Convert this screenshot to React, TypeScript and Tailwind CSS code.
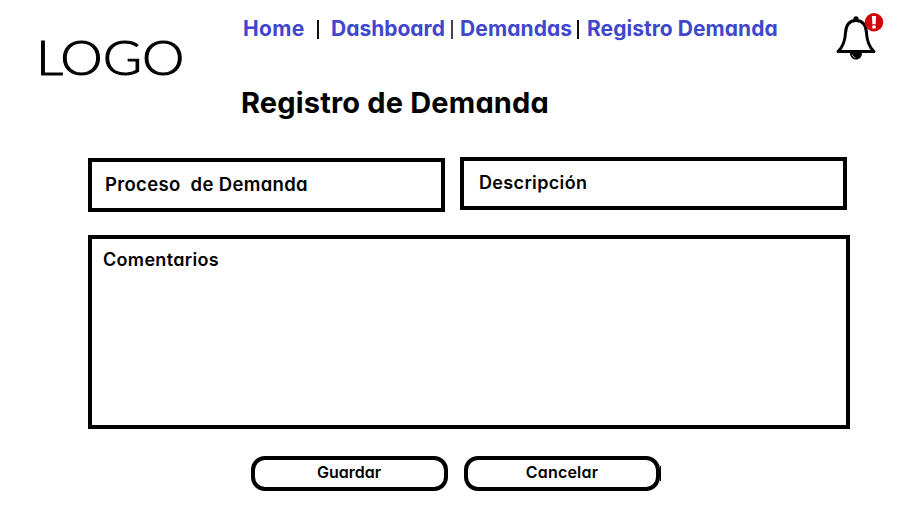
import type { ReactNode } from "react";

function Separator({ className }: { className: string }) {
  return <span className={`h-[19px] w-0.5 shrink-0 ${className}`} />;
}

function NavLink({ className, children }: { className: string; children: ReactNode }) {
  return (
    <a href="#" className={`shrink-0 text-[21px] leading-6 font-bold whitespace-nowrap text-[#3f48cc] ${className}`}>
      {children}
    </a>
  );
}

function BellIcon() {
  return (
    <svg viewBox="0 0 50 50" className="h-[50px] w-[50px]" aria-label="Notificaciones">
      <circle cx="21" cy="8.800" r="2.600" fill="#000" />
      <path
        d="M3 41.500C8 37 10 31 10.500 23C11 14.500 14 10.500 21 10.500C28 10.500 31 14.500 31.500 23C32 31 34 37 39 41.500Z"
        fill="#fff"
        stroke="#000"
        strokeWidth="3"
        strokeLinejoin="round"
      />
      <path d="M15 43H27C27 47 24.500 49.500 21 49.500C17.500 49.500 15 47 15 43Z" fill="#000" />
      <path d="M17.300 44.500C17.600 46.300 18.700 47.300 20.300 47.700" fill="none" stroke="#fff" strokeWidth="0.800" />
      <circle cx="39" cy="12.300" r="9.200" fill="#d00408" />
      <path d="M36.900 6H41.100L40.600 14.200H37.400Z" fill="#fff" />
      <rect x="37.200" y="15.400" width="3.600" height="3" rx="0.600" fill="#fff" />
    </svg>
  );
}

export default function App() {
  return (
    <div className="flex h-[527px] w-[902px] flex-col overflow-hidden bg-white font-['Inter','Liberation_Sans',sans-serif] text-black [font-feature-settings:'cv11']">
      <header className="flex h-[157px] shrink-0 items-start">
        <div className="w-[242px] shrink-0 pt-[28px] pl-[36px]">
          <div className="w-[150px] origin-left scale-x-[1.115] font-['Lato',sans-serif] text-[48px] leading-[58px] font-light [-webkit-text-stroke:1px_#000]">
            <span className="tracking-[-2.5px]">L</span>OGO
          </div>
        </div>
        <div className="w-[593px] shrink-0 pt-[17px]">
          <nav className="flex h-6 items-center">
            <NavLink className="ml-[1px] w-[63px] tracking-[0.3px]">Home</NavLink>
            <Separator className="ml-[11px] bg-[#111]" />
            <NavLink className="ml-[12px] w-[116px]">Dashboard</NavLink>
            <Separator className="ml-[4px] bg-[#444]" />
            <NavLink className="ml-[7px] w-[114px] tracking-[0.1px]">Demandas</NavLink>
            <Separator className="ml-[3px] bg-[#111]" />
            <NavLink className="ml-[8px] tracking-[0.05px]">Registro Demanda</NavLink>
          </nav>
          <h1 className="mt-[44px] -ml-px text-[29px] leading-9 font-bold tracking-[0.17px] whitespace-nowrap">
            Registro de Demanda
          </h1>
        </div>
        <button className="mt-[10px]">
          <BellIcon />
        </button>
      </header>
      <main className="flex flex-col pl-[88px]">
        <div className="flex h-[78px] items-start gap-[15px]">
          <div className="mt-px h-[54px] w-[357px] border-4 border-black pt-[10px] pl-[13px] text-[18.5px] leading-6 font-semibold tracking-[0.33px] whitespace-pre">
            Proceso  de Demanda
          </div>
          <div className="h-[53px] w-[387px] border-4 border-black pt-[10px] pl-[15px] text-[18px] leading-6 font-semibold tracking-[0.35px]">
            Descripción
          </div>
        </div>
        <div className="h-[194px] w-[762px] border-4 border-black pt-[9px] pl-[11px] text-[18px] leading-6 font-semibold tracking-[0.32px]">
          Comentarios
        </div>
        <div className="mt-[27px] ml-[163px] flex gap-4">
          <button className="h-[35px] w-[197px] rounded-[14px] border-4 border-black pr-px pb-1 text-[16px] leading-6 font-semibold">
            Guardar
          </button>
          <div className="flex w-[197px] items-center">
            <button className="h-[35px] w-[196px] rounded-[14px] border-4 border-black pb-1 text-[16px] leading-6 font-semibold tracking-[0.2px]">
              Cancelar
            </button>
            <span className="h-[15px] w-px bg-black" />
          </div>
        </div>
      </main>
    </div>
  );
}
